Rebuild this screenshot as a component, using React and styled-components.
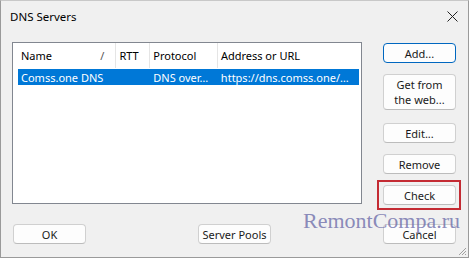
import React from 'react';
import styled, { createGlobalStyle } from 'styled-components';

const Global = createGlobalStyle`
  html, body {
    margin: 0;
    padding: 0;
    background: #f0f0f0;
  }
  body {
    font-family: "Noto Sans", "Open Sans", sans-serif;
    font-size: 11px;
    color: #000;
  }
`;

const Window = styled.div`
  position: relative;
  width: 469px;
  height: 258px;
  box-sizing: border-box;
  background: #f0f0f0;
  border: 1px solid #9a9a9a;
  border-top-color: #c8c8c8;
  display: flex;
  flex-direction: column;
  overflow: hidden;
`;

const TitleBar = styled.div`
  height: 31px;
  display: flex;
  align-items: center;
  justify-content: space-between;
  padding: 0 9px 0 9px;
  font-size: 11.5px;
`;

const Close = styled.svg`
  width: 11px;
  height: 11px;
  margin-right: 1px;
`;

const Body = styled.div`
  display: flex;
  gap: 21px;
  padding: 10px 12px 0 11px;
`;

const List = styled.div`
  width: 350px;
  height: 162px;
  box-sizing: border-box;
  background: #fff;
  border: 1px solid #828790;
  padding: 0 2px 0 5px;
`;

const HeaderRow = styled.div`
  display: flex;
  height: 25px;
  align-items: center;
`;

const Row = styled.div`
  display: flex;
  height: 16px;
  margin-top: 1px;
  align-items: center;
  background: ${(p) => (p.selected ? '#0078d7' : 'transparent')};
  color: ${(p) => (p.selected ? '#fff' : '#000')};
`;

const HeadCell = styled.div`
  width: ${(p) => p.w}px;
  height: 100%;
  box-sizing: border-box;
  display: flex;
  align-items: center;
  justify-content: space-between;
  padding: 0 5px 0 3px;
  border-right: ${(p) => (p.last ? 'none' : '1px solid #e5e5e5')};
  white-space: nowrap;
  overflow: hidden;
`;

const Cell = styled.div`
  width: ${(p) => p.w}px;
  box-sizing: border-box;
  padding: 0 3px 0 3px;
  white-space: nowrap;
  overflow: hidden;
`;

const SortMark = styled.span`
  color: #555;
  font-size: 11px;
  margin-right: 6px;
`;

const Side = styled.div`
  display: flex;
  flex-direction: column;
  padding-top: 1px;
`;

const Button = styled.button`
  position: relative;
  width: 73px;
  height: ${(p) => (p.tall ? 36 : 20)}px;
  margin-bottom: ${(p) => p.mb || 0}px;
  box-sizing: border-box;
  background: #fdfdfd;
  border: 1px solid ${(p) => (p.primary ? '#0067c0' : '#d0d0d0')};
  border-bottom-color: ${(p) => (p.primary ? '#0067c0' : '#bcbcbc')};
  border-radius: 4px;
  font-family: inherit;
  font-size: 11px;
  line-height: 15px;
  color: #1a1a1a;
  padding: 0;

  ${(p) =>
    p.marked &&
    `
    &::after {
      content: '';
      position: absolute;
      inset: -6px -6px -6px -7px;
      border: 2px solid #c42b33;
    }
  `}
`;

const Footer = styled.div`
  display: flex;
  justify-content: space-between;
  align-items: center;
  padding: 19px 12px 0 12px;
`;

const Watermark = styled.div`
  position: absolute;
  left: 302px;
  top: 207px;
  font-family: "Liberation Serif", "Times New Roman", serif;
  font-size: 22px;
  color: rgba(110, 110, 170, 0.8);
  pointer-events: none;
`;

const Grip = styled.svg`
  position: absolute;
  right: 1px;
  bottom: 1px;
  width: 10px;
  height: 10px;
`;

const columns = [
  { w: 99, head: 'Name', sort: true },
  { w: 34, head: 'RTT' },
  { w: 68, head: 'Protocol' },
  { w: 142, head: 'Address or URL', last: true },
];

const rows = [
  { cells: ['Comss.one DNS', '', 'DNS over…', 'https://dns.comss.one/…'], selected: true },
];

export default function App() {
  return (
    <Window>
      <Global />
      <TitleBar>
        <span>DNS Servers</span>
        <Close viewBox="0 0 11 11">
          <path d="M0.5 0.5L10.5 10.5M10.5 0.5L0.5 10.5" stroke="#222" strokeWidth="1" />
        </Close>
      </TitleBar>
      <Body>
        <List>
          <HeaderRow>
            {columns.map((c) => (
              <HeadCell key={c.head} w={c.w} last={c.last}>
                <span>{c.head}</span>
                {c.sort && <SortMark>/</SortMark>}
              </HeadCell>
            ))}
          </HeaderRow>
          {rows.map((r, i) => (
            <Row key={i} selected={r.selected}>
              {r.cells.map((t, j) => (
                <Cell key={j} w={columns[j].w}>
                  {t}
                </Cell>
              ))}
            </Row>
          ))}
        </List>
        <Side>
          <Button primary mb={11}>Add...</Button>
          <Button tall mb={13}>
            Get from
            <br />
            the web...
          </Button>
          <Button mb={11}>Edit...</Button>
          <Button mb={11}>Remove</Button>
          <Button marked>Check</Button>
        </Side>
      </Body>
      <Footer>
        <Button>OK</Button>
        <Button>Server Pools</Button>
        <Button>Cancel</Button>
      </Footer>
      <Watermark>RemontCompa.ru</Watermark>
      <Grip viewBox="0 0 10 10">
        <path d="M9 2L2 9M9 5L5 9M9 8L8 9" stroke="#a0a0a0" strokeWidth="1" />
      </Grip>
    </Window>
  );
}
